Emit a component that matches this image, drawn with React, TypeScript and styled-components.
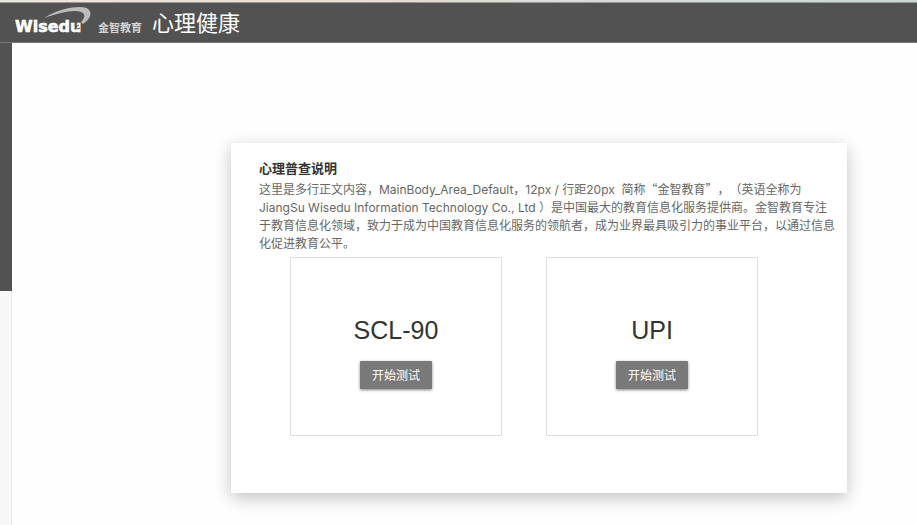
import React from "react";
import styled, { createGlobalStyle } from "styled-components";

const GlobalStyle = createGlobalStyle`
  * { box-sizing: border-box; }
  body {
    margin: 0;
    background: #f7f7f7;
    font-family: Inter, "Noto Sans CJK SC", sans-serif;
    font-size: 12px;
    color: #666;
  }
  h1, h2, h3, p { margin: 0; }
`;

const Page = styled.div`
  display: flex;
  flex-direction: column;
  min-height: 100vh;
`;

const TopStrip = styled.div`
  height: 3px;
  background: linear-gradient(to right, #e9e6e1, #ecdfd3 30%, #d9dcd8 60%, #cdd6d6);
  border-bottom: 1px solid #999;
`;

const Header = styled.header`
  display: flex;
  align-items: center;
  gap: 9px;
  height: 40px;
  padding-left: 15px;
  background: #525252;
  border-bottom: 1px solid #777;
`;

const Logo = styled.svg`
  display: block;
  flex: none;
`;

const AppTitle = styled.h1`
  color: #fff;
  font-size: 22px;
  line-height: 32px;
  font-weight: 400;
`;

const Body = styled.div`
  display: flex;
  flex: 1;
`;

const Rail = styled.div`
  width: 12px;
  flex: none;
  border-right: 1px solid #ebebeb;

  &::before {
    content: "";
    display: block;
    width: 12px;
    height: 248px;
    background: #525252;
    border-right: 1px solid #888;
  }
`;

const Main = styled.main`
  flex: 1;
  background: #fefefe;
  padding: 100px 70px 32px 219px;
`;

const Card = styled.section`
  min-height: 350px;
  padding: 14px 10px 56px 28px;
  background: #fff;
  box-shadow: 0 5px 16px rgba(0, 0, 0, 0.24);
`;

const CardTitle = styled.h2`
  margin-bottom: 1px;
  color: #333;
  font-size: 13px;
  line-height: 22px;
  font-weight: 700;
`;

const Description = styled.p`
  line-height: 18px;
  text-spacing-trim: space-all;
`;

const Quoted = styled.span`
  font-family: "Noto Sans CJK SC", sans-serif;
`;

const Tests = styled.div`
  display: flex;
  flex-wrap: wrap;
  gap: 44px;
  padding: 4px 0 0 31px;
`;

const TestBox = styled.article`
  display: flex;
  flex-direction: column;
  align-items: center;
  width: 212px;
  padding: 56px 0 46px;
  border: 1px solid #ddd;
`;

const TestName = styled.h3`
  color: #333;
  font-family: "Liberation Sans", sans-serif;
  font-size: 25px;
  line-height: 32px;
  font-weight: 400;
`;

const StartButton = styled.button`
  height: 28px;
  margin-top: 15px;
  padding: 0 12px;
  border: 0;
  border-radius: 1px;
  background: #797979;
  box-shadow: 0 1px 3px rgba(0, 0, 0, 0.5);
  color: #fff;
  font: 12px/28px "Noto Sans CJK SC", sans-serif;
  cursor: pointer;
`;

const tests = ["SCL-90", "UPI"];

export default function App() {
  return (
    <>
      <GlobalStyle />
      <Page>
        <TopStrip />
        <Header>
          <Logo width="128" height="32" viewBox="0 0 128 32" role="img" aria-label="Wisedu 金智教育">
            <path
              d="M29 11 C41 3 56 0 65 0 C79 0 78 11 68 17 L66 15 C72 9 70 4 60 4 C51 4 41 7 29 11 Z"
              fill="#bcbcbc"
            />
            <text
              x="0"
              y="25"
              fill="#fff"
              stroke="#fff"
              strokeWidth="0.6"
              fontFamily="DejaVu Sans, sans-serif"
              fontWeight="700"
              fontSize="16"
            >
              Wisedu
            </text>
            <path d="M61 20 L64 18 M62 22 L65 21" stroke="#525252" strokeWidth="1" />
            <text x="83" y="25" fill="#d4d4d4" fontFamily="Noto Sans CJK SC, sans-serif" fontWeight="700" fontSize="11">
              金智教育
            </text>
          </Logo>
          <AppTitle>心理健康</AppTitle>
        </Header>
        <Body>
          <Rail />
          <Main>
            <Card>
              <CardTitle>心理普查说明</CardTitle>
              <Description>
                这里是多行正文内容，MainBody_Area_Default，12px / 行距20px&nbsp; 简称<Quoted>“金智教育”</Quoted>，（英语全称为
                <br />
                JiangSu Wisedu Information Technology Co., Ltd ）是中国最大的教育信息化服务提供商。金智教育专注
                <br />
                于教育信息化领域，致力于成为中国教育信息化服务的领航者，成为业界最具吸引力的事业平台，以通过信息
                <br />
                化促进教育公平。
              </Description>
              <Tests>
                {tests.map((name) => (
                  <TestBox key={name}>
                    <TestName>{name}</TestName>
                    <StartButton type="button">开始测试</StartButton>
                  </TestBox>
                ))}
              </Tests>
            </Card>
          </Main>
        </Body>
      </Page>
    </>
  );
}
